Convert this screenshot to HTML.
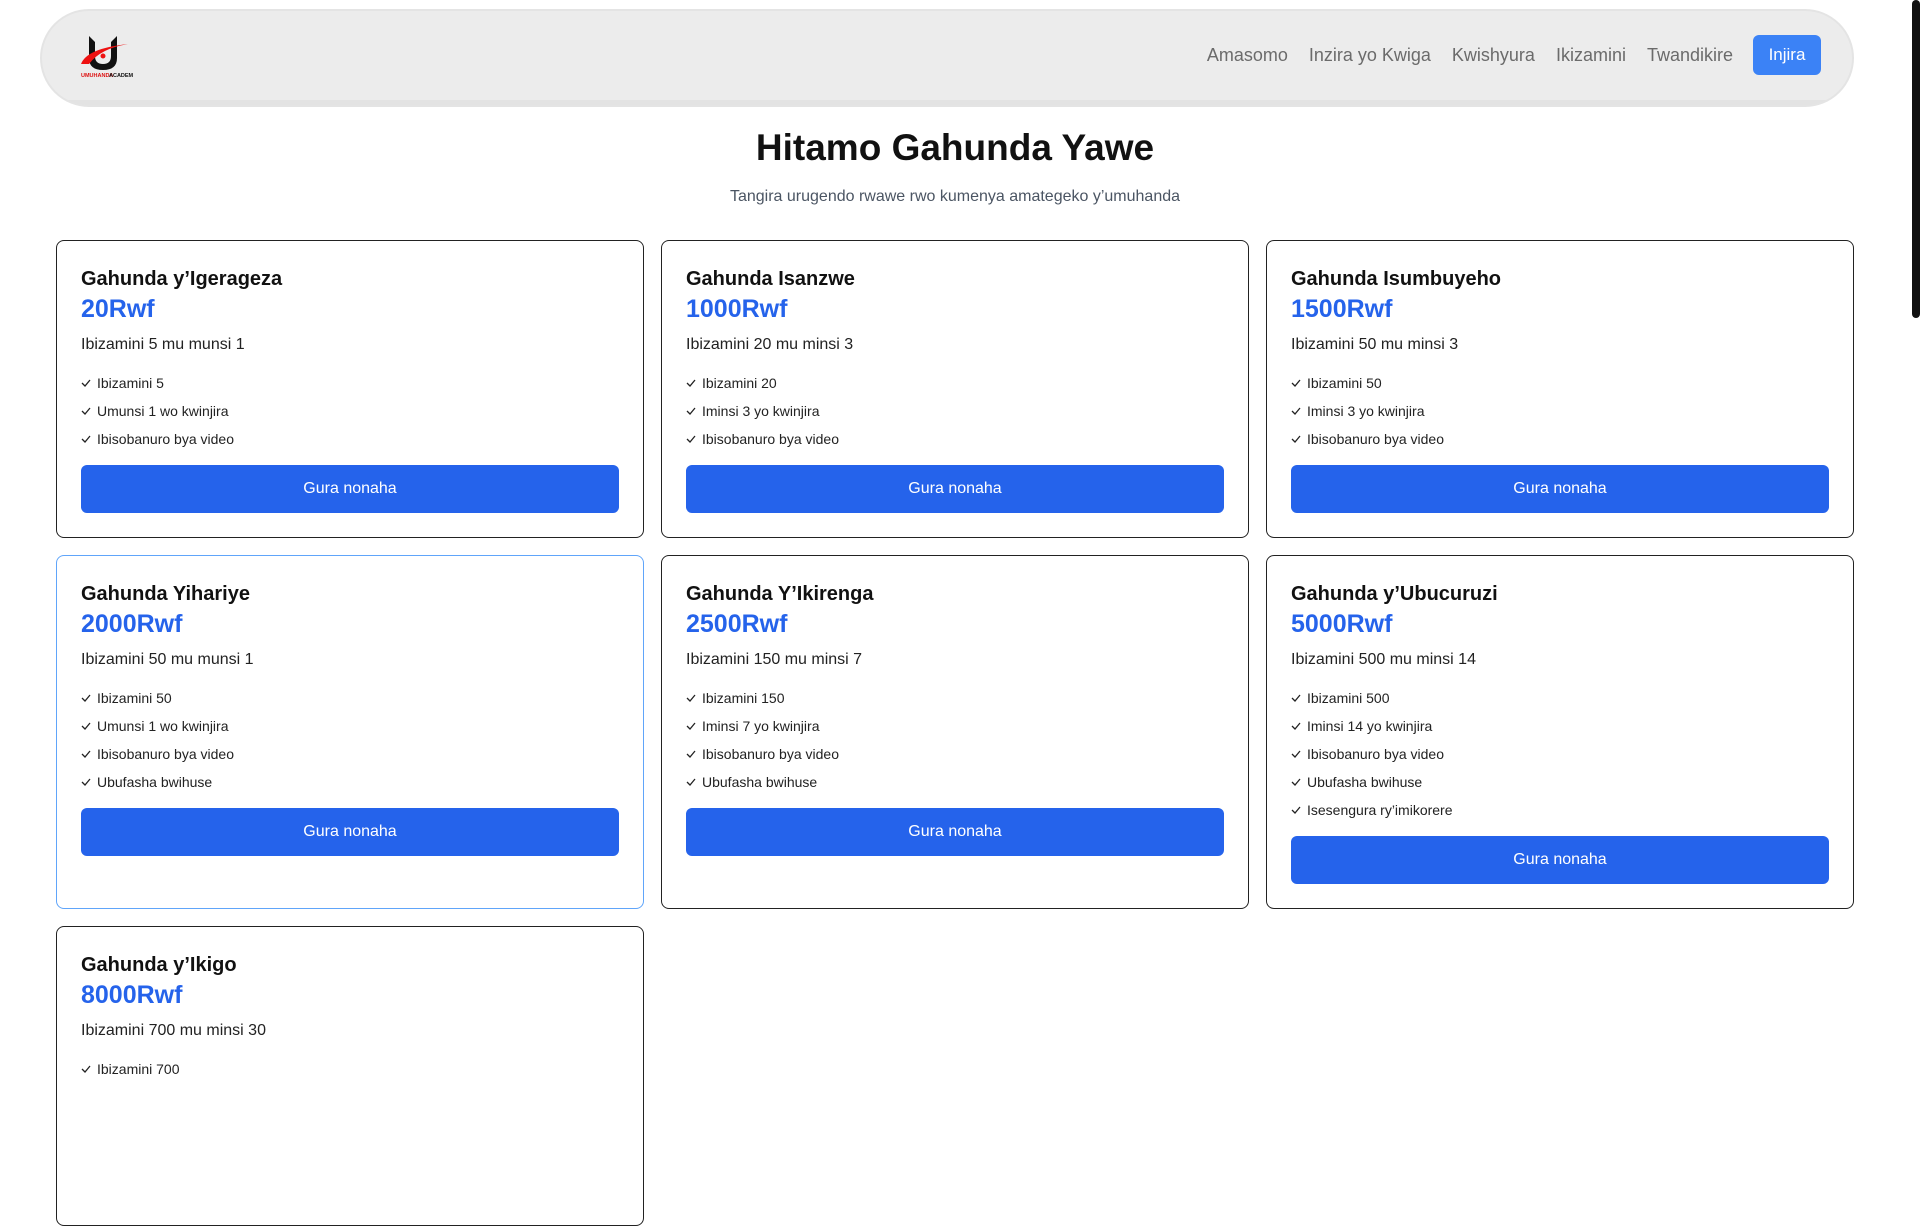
<!DOCTYPE html>
<html><head><meta charset="utf-8"><style>
*{box-sizing:border-box;margin:0;padding:0}
html,body{width:1920px;height:1080px;overflow:hidden;background:#fff;font-family:"Liberation Sans",Arial,sans-serif;color:#111}
.nav{position:absolute;left:40px;top:9px;width:1814px;height:98px;border:2px solid #e4e4e4;border-radius:49px;background:linear-gradient(#ececec 0,#ececec 89px,#e3e3e3 89px)}
.logo{position:absolute;left:81px;top:34px}
.links{position:absolute;right:99px;top:35px;height:40px;display:flex;align-items:center}
.links a{color:#6b6b6b;font-size:18px;text-decoration:none;margin-left:21px}
.links .btn{background:#3b82f6;color:#fff;border-radius:6px;height:40px;width:68px;display:flex;align-items:center;justify-content:center;margin-left:20px;font-size:17px}
h1{position:absolute;top:127px;left:0;width:1910px;text-align:center;font-size:37px;font-weight:bold;color:#111}
.sub{position:absolute;top:188px;left:0;width:1910px;text-align:center;font-size:16px;color:#4b5563}
.grid{position:absolute;left:56px;top:240px;width:1798px;display:grid;grid-template-columns:repeat(3,1fr);gap:17px 17px}
.card{border:1px solid #222;border-radius:8px;padding:24px;background:#fff}
.card.hl{border-color:#60a5fa}
.t{font-size:20px;font-weight:bold;line-height:28px}
.p{font-size:25px;font-weight:bold;color:#2563eb;line-height:32px}
.d{font-size:16px;line-height:24px;margin-top:8px;color:#222}
ul{list-style:none;margin-top:16px}
li{font-size:14px;line-height:20px;margin-bottom:8px;display:flex;align-items:center;color:#222}
li svg{margin-right:6px}
.b{margin-top:16px;height:48px;background:#2563eb;color:#fff;border-radius:6px;display:flex;align-items:center;justify-content:center;font-size:16px}
.sb{position:absolute;right:0;top:0;width:8px;height:318px;background:#111;border-radius:4px}
</style></head><body>
<div class="nav"></div>
<svg class="logo" width="52" height="44" viewBox="0 0 52 44">
<path d="M8 2 L14 8 V22 Q14 30 22 30 Q30 30 30 22 V8 L36 2 V24 Q36 36 22 36 Q8 36 8 24Z" fill="#111"/>
<path d="M0 30 Q6 14 48 10 Q20 14 8 30 Z" fill="#e11"/>
<circle cx="22" cy="22" r="2.5" fill="#e11"/>
<text x="0" y="43" font-size="5.5" font-family="Liberation Sans" font-weight="bold" fill="#d11">UMUHANDA</text>
<text x="28" y="43" font-size="5.5" font-family="Liberation Sans" font-weight="bold" fill="#111">ACADEMY</text>
</svg>
<div class="links"><a>Amasomo</a><a>Inzira yo Kwiga</a><a>Kwishyura</a><a>Ikizamini</a><a>Twandikire</a><span class="btn">Injira</span></div>
<div class="sb"></div>
<h1>Hitamo Gahunda Yawe</h1>
<div class="sub">Tangira urugendo rwawe rwo kumenya amategeko y’umuhanda</div>
<div class="grid">
<div class="card"><div class="t">Gahunda y’Igerageza</div><div class="p">20Rwf</div><div class="d">Ibizamini 5 mu munsi 1</div><ul><li><svg width="10" height="8" viewBox="0 0 10 8"><path d="M1 4l3 3 5-6" fill="none" stroke="#222" stroke-width="1.3"/></svg>Ibizamini 5</li><li><svg width="10" height="8" viewBox="0 0 10 8"><path d="M1 4l3 3 5-6" fill="none" stroke="#222" stroke-width="1.3"/></svg>Umunsi 1 wo kwinjira</li><li><svg width="10" height="8" viewBox="0 0 10 8"><path d="M1 4l3 3 5-6" fill="none" stroke="#222" stroke-width="1.3"/></svg>Ibisobanuro bya video</li></ul><div class="b">Gura nonaha</div></div>
<div class="card"><div class="t">Gahunda Isanzwe</div><div class="p">1000Rwf</div><div class="d">Ibizamini 20 mu minsi 3</div><ul><li><svg width="10" height="8" viewBox="0 0 10 8"><path d="M1 4l3 3 5-6" fill="none" stroke="#222" stroke-width="1.3"/></svg>Ibizamini 20</li><li><svg width="10" height="8" viewBox="0 0 10 8"><path d="M1 4l3 3 5-6" fill="none" stroke="#222" stroke-width="1.3"/></svg>Iminsi 3 yo kwinjira</li><li><svg width="10" height="8" viewBox="0 0 10 8"><path d="M1 4l3 3 5-6" fill="none" stroke="#222" stroke-width="1.3"/></svg>Ibisobanuro bya video</li></ul><div class="b">Gura nonaha</div></div>
<div class="card"><div class="t">Gahunda Isumbuyeho</div><div class="p">1500Rwf</div><div class="d">Ibizamini 50 mu minsi 3</div><ul><li><svg width="10" height="8" viewBox="0 0 10 8"><path d="M1 4l3 3 5-6" fill="none" stroke="#222" stroke-width="1.3"/></svg>Ibizamini 50</li><li><svg width="10" height="8" viewBox="0 0 10 8"><path d="M1 4l3 3 5-6" fill="none" stroke="#222" stroke-width="1.3"/></svg>Iminsi 3 yo kwinjira</li><li><svg width="10" height="8" viewBox="0 0 10 8"><path d="M1 4l3 3 5-6" fill="none" stroke="#222" stroke-width="1.3"/></svg>Ibisobanuro bya video</li></ul><div class="b">Gura nonaha</div></div>
<div class="card hl"><div class="t">Gahunda Yihariye</div><div class="p">2000Rwf</div><div class="d">Ibizamini 50 mu munsi 1</div><ul><li><svg width="10" height="8" viewBox="0 0 10 8"><path d="M1 4l3 3 5-6" fill="none" stroke="#222" stroke-width="1.3"/></svg>Ibizamini 50</li><li><svg width="10" height="8" viewBox="0 0 10 8"><path d="M1 4l3 3 5-6" fill="none" stroke="#222" stroke-width="1.3"/></svg>Umunsi 1 wo kwinjira</li><li><svg width="10" height="8" viewBox="0 0 10 8"><path d="M1 4l3 3 5-6" fill="none" stroke="#222" stroke-width="1.3"/></svg>Ibisobanuro bya video</li><li><svg width="10" height="8" viewBox="0 0 10 8"><path d="M1 4l3 3 5-6" fill="none" stroke="#222" stroke-width="1.3"/></svg>Ubufasha bwihuse</li></ul><div class="b">Gura nonaha</div></div>
<div class="card"><div class="t">Gahunda Y’Ikirenga</div><div class="p">2500Rwf</div><div class="d">Ibizamini 150 mu minsi 7</div><ul><li><svg width="10" height="8" viewBox="0 0 10 8"><path d="M1 4l3 3 5-6" fill="none" stroke="#222" stroke-width="1.3"/></svg>Ibizamini 150</li><li><svg width="10" height="8" viewBox="0 0 10 8"><path d="M1 4l3 3 5-6" fill="none" stroke="#222" stroke-width="1.3"/></svg>Iminsi 7 yo kwinjira</li><li><svg width="10" height="8" viewBox="0 0 10 8"><path d="M1 4l3 3 5-6" fill="none" stroke="#222" stroke-width="1.3"/></svg>Ibisobanuro bya video</li><li><svg width="10" height="8" viewBox="0 0 10 8"><path d="M1 4l3 3 5-6" fill="none" stroke="#222" stroke-width="1.3"/></svg>Ubufasha bwihuse</li></ul><div class="b">Gura nonaha</div></div>
<div class="card"><div class="t">Gahunda y’Ubucuruzi</div><div class="p">5000Rwf</div><div class="d">Ibizamini 500 mu minsi 14</div><ul><li><svg width="10" height="8" viewBox="0 0 10 8"><path d="M1 4l3 3 5-6" fill="none" stroke="#222" stroke-width="1.3"/></svg>Ibizamini 500</li><li><svg width="10" height="8" viewBox="0 0 10 8"><path d="M1 4l3 3 5-6" fill="none" stroke="#222" stroke-width="1.3"/></svg>Iminsi 14 yo kwinjira</li><li><svg width="10" height="8" viewBox="0 0 10 8"><path d="M1 4l3 3 5-6" fill="none" stroke="#222" stroke-width="1.3"/></svg>Ibisobanuro bya video</li><li><svg width="10" height="8" viewBox="0 0 10 8"><path d="M1 4l3 3 5-6" fill="none" stroke="#222" stroke-width="1.3"/></svg>Ubufasha bwihuse</li><li><svg width="10" height="8" viewBox="0 0 10 8"><path d="M1 4l3 3 5-6" fill="none" stroke="#222" stroke-width="1.3"/></svg>Isesengura ry’imikorere</li></ul><div class="b">Gura nonaha</div></div>
<div class="card" style="height:300px"><div class="t">Gahunda y’Ikigo</div><div class="p">8000Rwf</div><div class="d">Ibizamini 700 mu minsi 30</div><ul><li><svg width="10" height="8" viewBox="0 0 10 8"><path d="M1 4l3 3 5-6" fill="none" stroke="#222" stroke-width="1.3"/></svg>Ibizamini 700</li></ul></div>
</div>
</body></html>
